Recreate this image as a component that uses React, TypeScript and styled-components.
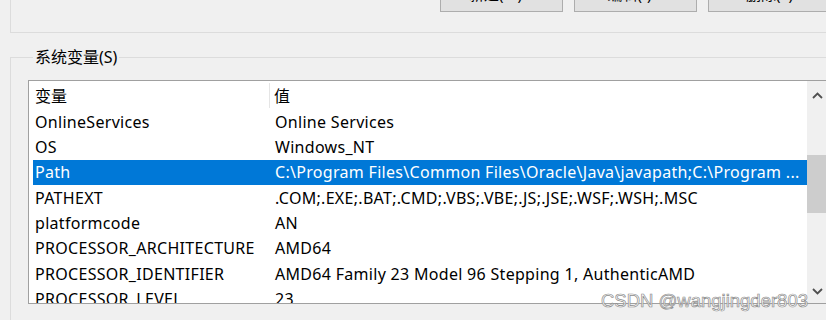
import React from "react";
import styled, { createGlobalStyle } from "styled-components";

const GlobalStyle = createGlobalStyle`
  html, body {
    margin: 0;
    padding: 0;
    background: #f0f0f0;
  }
  body {
    font-family: "Noto Sans", "Noto Sans CJK SC", sans-serif;
    font-size: 16px;
    letter-spacing: 0.3px;
    color: #000;
  }
`;

const Page = styled.div`
  position: relative;
  width: 826px;
  height: 320px;
  overflow: hidden;
  background: #f0f0f0;
`;

const TopGroup = styled.div`
  display: flex;
  align-items: flex-start;
  margin-left: 10px;
  width: 900px;
  height: 33px;
  border-left: 1px solid #dcdcdc;
  border-bottom: 1px solid #dcdcdc;
  box-sizing: border-box;
`;

const ButtonRow = styled.div`
  display: flex;
  gap: 11px;
  margin-left: 429px;
  margin-top: -18px;
`;

const Button = styled.div`
  flex: none;
  width: 123px;
  height: 30px;
  box-sizing: border-box;
  padding-bottom: 8px;
  display: flex;
  align-items: center;
  justify-content: center;
  background: #e1e1e1;
  border: 1px solid #adadad;
  font-size: 15px;
  letter-spacing: 0;
  white-space: nowrap;
`;

const GroupBox = styled.fieldset`
  margin: 15px 0 0 10px;
  padding: 14px 0 0 17px;
  width: 900px;
  min-width: 0;
  height: 300px;
  box-sizing: border-box;
  border: 1px solid #dcdcdc;
`;

const Legend = styled.legend`
  margin-left: 5px;
  padding: 0 2px;
  font-size: 16px;
  letter-spacing: 0;
  line-height: 18px;
`;

const ListView = styled.div`
  display: flex;
  width: 820px;
  height: 224px;
  box-sizing: border-box;
  border: 1px solid #a0a0a0;
  background: #fff;
`;

const ListBody = styled.div`
  flex: none;
  width: 778px;
  overflow: hidden;
`;

const HeaderRow = styled.div`
  display: flex;
  align-items: center;
  height: 28px;
`;

const HeaderCell = styled.div<{ $w?: number; $pl: number }>`
  flex: ${(p) => (p.$w ? "none" : "1")};
  width: ${(p) => (p.$w ? `${p.$w}px` : "auto")};
  padding-left: ${(p) => p.$pl}px;
  box-sizing: border-box;
  white-space: nowrap;
  letter-spacing: 0;
`;

const HeaderSep = styled.div`
  flex: none;
  width: 1px;
  height: 25px;
  background: #e5e5e5;
`;

const Row = styled.div<{ $selected?: boolean }>`
  display: flex;
  align-items: center;
  height: 25.35px;
  margin-left: 4px;
  background: ${(p) => (p.$selected ? "#0078d7" : "transparent")};
  color: ${(p) => (p.$selected ? "#fff" : "#000")};
`;

const NameCell = styled.div`
  flex: none;
  width: 236px;
  padding-left: 2px;
  box-sizing: border-box;
  white-space: nowrap;
  overflow: hidden;
`;

const ValueCell = styled.div`
  flex: 1;
  padding-left: 6px;
  white-space: nowrap;
  overflow: hidden;
`;

const ScrollBar = styled.div`
  flex: none;
  width: 20px;
  display: flex;
  flex-direction: column;
  background: #f0f0f0;
`;

const ArrowBox = styled.div<{ $h: number }>`
  flex: none;
  height: ${(p) => p.$h}px;
  display: flex;
  align-items: center;
  justify-content: center;
`;

const Track = styled.div`
  flex: 1;
  padding-top: 46px;
`;

const Thumb = styled.div`
  height: 58px;
  background: #cdcdcd;
`;

const Watermark = styled.div`
  position: absolute;
  left: 601px;
  top: 290px;
  font-family: "Liberation Sans", Arial, sans-serif;
  font-size: 18.5px;
  letter-spacing: 0;
  color: rgba(255, 255, 255, 0.85);
  -webkit-text-stroke: 0.7px #8c8c8c;
  white-space: nowrap;
  pointer-events: none;
`;

const Chevron = ({ up }: { up?: boolean }) => (
  <svg width="11" height="7" viewBox="0 0 11 7">
    <path
      d={up ? "M1 6L5.5 1.5L10 6" : "M1 1L5.5 5.5L10 1"}
      fill="none"
      stroke="#505050"
      strokeWidth="1.8"
    />
  </svg>
);

const rows = [
  ["OnlineServices", "Online Services"],
  ["OS", "Windows_NT"],
  [
    "Path",
    "C:\\Program Files\\Common Files\\Oracle\\Java\\javapath;C:\\Program ...",
  ],
  ["PATHEXT", ".COM;.EXE;.BAT;.CMD;.VBS;.VBE;.JS;.JSE;.WSF;.WSH;.MSC"],
  ["platformcode", "AN"],
  ["PROCESSOR_ARCHITECTURE", "AMD64"],
  ["PROCESSOR_IDENTIFIER", "AMD64 Family 23 Model 96 Stepping 1, AuthenticAMD"],
  ["PROCESSOR_LEVEL", "23"],
];

export default function App() {
  return (
    <Page>
      <GlobalStyle />
      <TopGroup>
        <ButtonRow>
          <Button>新建(W)...</Button>
          <Button>编辑(I)...</Button>
          <Button>删除(L)</Button>
        </ButtonRow>
      </TopGroup>
      <GroupBox>
        <Legend>系统变量(S)</Legend>
        <ListView>
          <ListBody>
            <HeaderRow>
              <HeaderCell $w={240} $pl={6}>
                变量
              </HeaderCell>
              <HeaderSep />
              <HeaderCell $pl={4}>值</HeaderCell>
            </HeaderRow>
            {rows.map(([name, value]) => (
              <Row key={name} $selected={name === "Path"}>
                <NameCell>{name}</NameCell>
                <ValueCell>{value}</ValueCell>
              </Row>
            ))}
          </ListBody>
          <ScrollBar>
            <ArrowBox $h={28}>
              <Chevron up />
            </ArrowBox>
            <Track>
              <Thumb />
            </Track>
            <ArrowBox $h={24}>
              <Chevron />
            </ArrowBox>
          </ScrollBar>
        </ListView>
      </GroupBox>
      <Watermark>CSDN @wangjingder803</Watermark>
    </Page>
  );
}
